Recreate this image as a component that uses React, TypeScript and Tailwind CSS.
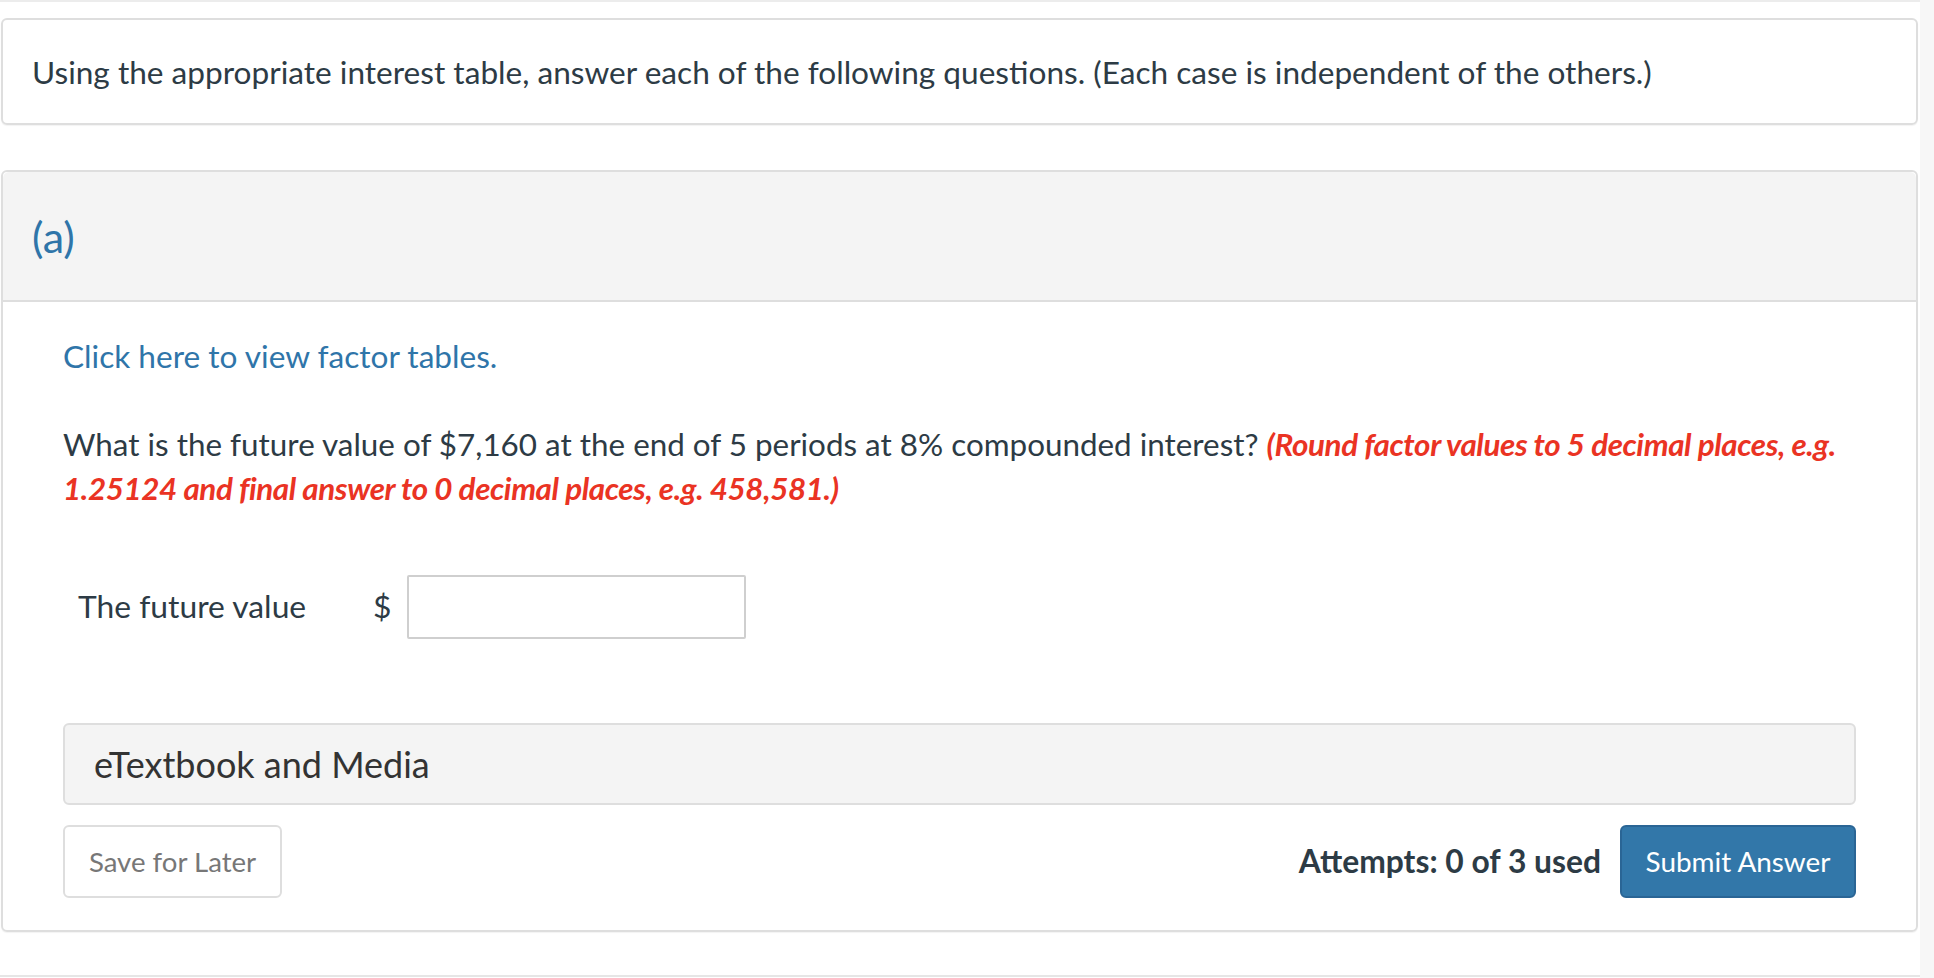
import React from "react";

export default function App() {
  return (
    <div
      className="flex w-full min-h-[978px] bg-white text-[#2d3b45]"
      style={{ fontFamily: "Lato, 'Open Sans', sans-serif" }}
    >
      <div className="w-[1920px] flex-shrink-0 flex flex-col">
        <div className="h-[2px] bg-[#ececec]" />

        {/* intro card */}
        <div className="mt-[16px] ml-[1px] mr-[2px] h-[107px] border-2 border-[#dedede] rounded-md flex items-center px-[29px] shadow-[0_1px_1px_rgba(0,0,0,0.05)]">
          <p className="text-[31.6px] leading-[44px]">
            Using the appropriate interest table, answer each of the following questions. (Each case is independent of the others.)
          </p>
        </div>

        {/* question card */}
        <div className="mt-[45px] ml-[1px] mr-[2px] border-2 border-[#dedede] rounded-md shadow-[0_1px_1px_rgba(0,0,0,0.05)]">
          <div className="h-[130px] bg-[#f4f4f4] border-b-2 border-[#dedede] rounded-t-md flex items-center px-[29px]">
            <span className="text-[43px] leading-none text-[#2f75a9]">(a)</span>
          </div>

          <div className="px-[60px] pt-[32px] pb-[32px]">
            <div className="h-[44px] flex items-center">
              <a className="text-[31.6px] leading-[44px] text-[#2f75a9]">
                Click here to view factor tables.
              </a>
            </div>

            <p className="mt-[44px] text-[31.4px] leading-[44px]">
              What is the future value of $7,160 at the end of 5 periods at 8% compounded interest?{" "}
              <span className="font-bold italic text-[#ea3323] tracking-[-0.4px]">
                (Round factor values to 5 decimal places, e.g. 1.25124 and final answer to 0 decimal places, e.g. 458,581.)
              </span>
            </p>

            <div className="mt-[65px] flex items-center h-[64px] pl-[15px]">
              <span className="text-[31.8px] w-[295px]">The future value</span>
              <span className="text-[31.8px] w-[34px]">$</span>
              <input
                type="text"
                className="w-[339px] h-[64px] border-2 border-[#cfcfcf] rounded-[2px] outline-none px-3 text-[24px]"
              />
            </div>

            <div className="mt-[84px] h-[82px] bg-[#f4f4f4] border-2 border-[#dedede] rounded-md flex items-center px-[29px]">
              <span className="text-[36px] text-[#333]">eTextbook and Media</span>
            </div>

            <div className="mt-[20px] flex items-center justify-between">
              <button className="w-[219px] h-[73px] border-2 border-[#dedede] rounded-md text-[27.6px] text-[#777] bg-white">
                Save for Later
              </button>
              <div className="flex items-center gap-[19px]">
                <span className="text-[31.8px] font-bold">Attempts: 0 of 3 used</span>
                <button className="w-[236px] h-[73px] bg-[#3277a9] border-2 border-[#2a6595] rounded-md text-[27.9px] text-white">
                  Submit Answer
                </button>
              </div>
            </div>
          </div>
        </div>

        <div className="mt-[43px] h-[2px] bg-[#e6e6e6]" />
      </div>
      <div className="flex-1 bg-[#f7f7f7]" />
    </div>
  );
}
